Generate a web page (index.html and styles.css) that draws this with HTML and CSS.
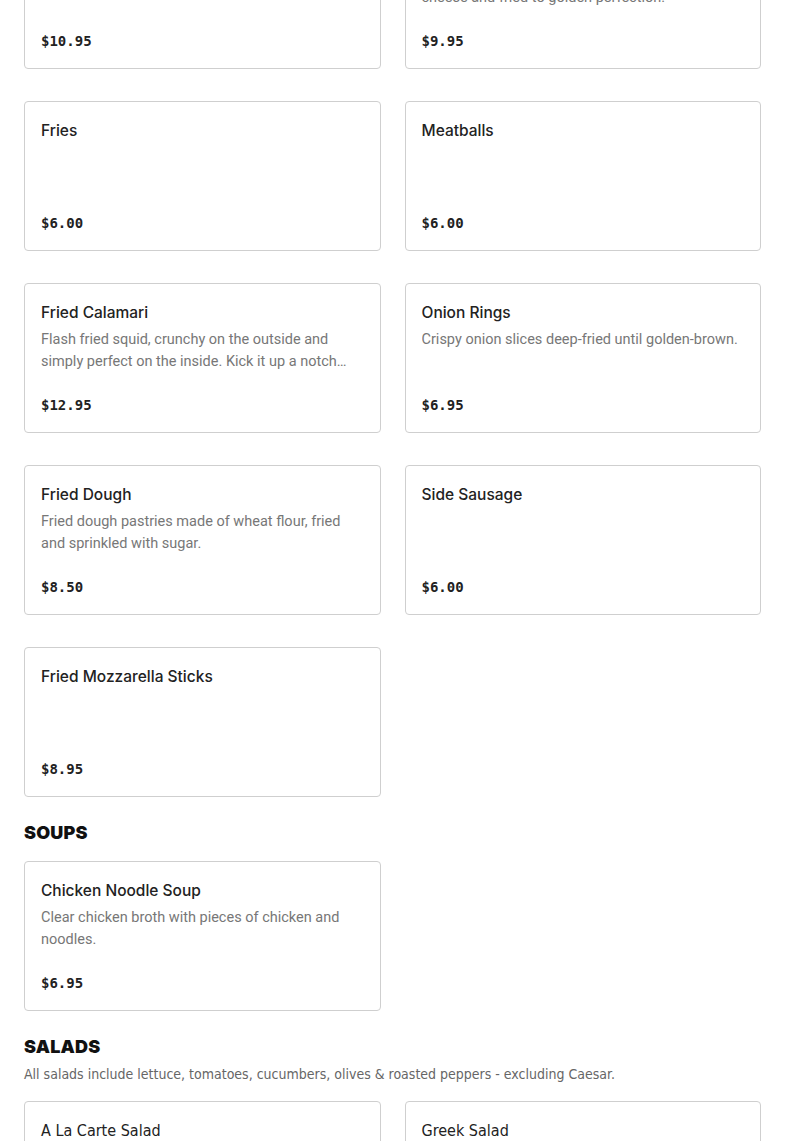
FILE: index.html
```html
<!DOCTYPE html>
<html lang="en">

<head>
    <meta charset="UTF-8">
    <meta name="viewport" content="width=device-width, initial-scale=1.0">
    <title>Menu</title>
    <link rel="stylesheet" href="styles.css">
</head>

<body>
    <main class="menu">

        <!--* Appetizers (continued) -->
        <section class="section">
            <div class="items">
                <div class="item">
                    <div class="item-name">Garlic Knots</div>
                    <div class="item-desc"></div>
                    <div class="item-price">$10.95</div>
                </div>
                <div class="item">
                    <div class="item-name">Arancini</div>
                    <div class="item-desc">Rice balls filled with beef, peas and mozzarella cheese and fried to golden perfection.</div>
                    <div class="item-price">$9.95</div>
                </div>
                <div class="item">
                    <div class="item-name">Fries</div>
                    <div class="item-desc"></div>
                    <div class="item-price">$6.00</div>
                </div>
                <div class="item">
                    <div class="item-name">Meatballs</div>
                    <div class="item-desc"></div>
                    <div class="item-price">$6.00</div>
                </div>
                <div class="item">
                    <div class="item-name">Fried Calamari</div>
                    <div class="item-desc">Flash fried squid, crunchy on the outside and simply perfect on the inside. Kick it up a notch with our spicy marinara sauce.</div>
                    <div class="item-price">$12.95</div>
                </div>
                <div class="item">
                    <div class="item-name">Onion Rings</div>
                    <div class="item-desc">Crispy onion slices deep-fried until golden-brown.</div>
                    <div class="item-price">$6.95</div>
                </div>
                <div class="item">
                    <div class="item-name">Fried Dough</div>
                    <div class="item-desc">Fried dough pastries made of wheat flour, fried and sprinkled with sugar.</div>
                    <div class="item-price">$8.50</div>
                </div>
                <div class="item">
                    <div class="item-name">Side Sausage</div>
                    <div class="item-desc"></div>
                    <div class="item-price">$6.00</div>
                </div>
                <div class="item">
                    <div class="item-name">Fried Mozzarella Sticks</div>
                    <div class="item-desc"></div>
                    <div class="item-price">$8.95</div>
                </div>
            </div>
        </section>

        <!--* Soups -->
        <section class="section">
            <h2 class="section-title">SOUPS</h2>
            <div class="items">
                <div class="item">
                    <div class="item-name">Chicken Noodle Soup</div>
                    <div class="item-desc">Clear chicken broth with pieces of chicken and noodles.</div>
                    <div class="item-price">$6.95</div>
                </div>
            </div>
        </section>

        <!--* Salads -->
        <section class="section salads">
            <h2 class="section-title">SALADS</h2>
            <p class="section-note">All salads include lettuce, tomatoes, cucumbers, olives &amp; roasted peppers - excluding Caesar.</p>
            <div class="items">
                <div class="item">
                    <div class="item-name">A La Carte Salad</div>
                    <div class="item-desc"></div>
                    <div class="item-price">$5.95</div>
                </div>
                <div class="item">
                    <div class="item-name">Greek Salad</div>
                    <div class="item-desc"></div>
                    <div class="item-price">$9.95</div>
                </div>
            </div>
        </section>

    </main>
</body>

</html>
```

FILE: styles.css
```css
body {
    margin: 0;
    background: #fff;
    font-family: Inter, "Liberation Sans", sans-serif;
    color: #222;
}

.menu {
    padding: 0 24px;
    /* page is shown scrolled part way down */
    margin-top: -81px;
}

.section {
    margin-bottom: 25px;
}

.section-title {
    margin: 0 0 17px;
    font-size: 18px;
    font-weight: 900;
    line-height: 22px;
    color: #111;
    letter-spacing: 0.2px;
}

.salads .section-title {
    margin-bottom: 5px;
}

.section-note {
    margin: 0 0 16px;
    font-family: "DejaVu Sans Condensed", "Liberation Sans Narrow", sans-serif;
    font-size: 14px;
    line-height: 22px;
    color: #666;
}

.items {
    display: grid;
    grid-template-columns: 1fr 1fr;
    gap: 32px 24px;
}

.item {
    border: 1px solid #cfcfcf;
    border-radius: 4px;
    padding: 16px;
    background: #fff;
}

.item-name {
    padding-top: 1px;
    font-size: 15.5px;
    font-weight: 500;
    line-height: 24px;
    color: #222;
}

.salads .item-name {
    font-family: "DejaVu Sans Condensed", "Liberation Sans Narrow", sans-serif;
    font-size: 16px;
}

.item-desc {
    margin-top: 4px;
    height: 44px;
    font-family: Roboto, "Liberation Sans", sans-serif;
    font-size: 14.5px;
    line-height: 22px;
    color: #777;
    display: -webkit-box;
    -webkit-line-clamp: 2;
    -webkit-box-orient: vertical;
    overflow: hidden;
}

.item-price {
    margin-top: 21px;
    font-family: "DejaVu Sans Mono", "Liberation Mono", monospace;
    font-size: 14px;
    font-weight: bold;
    line-height: 22px;
    color: #222;
}
```
